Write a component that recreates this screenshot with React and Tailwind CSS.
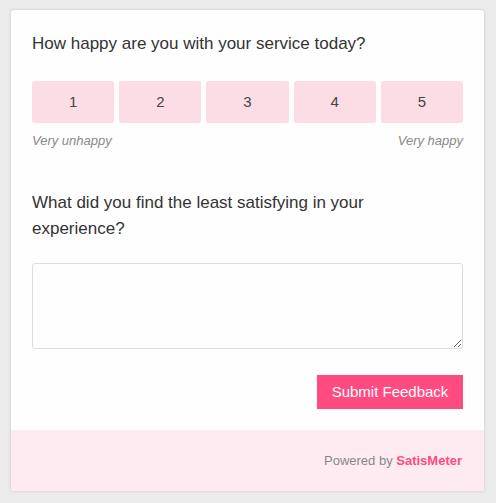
export default function App() {
  const nums = [1, 2, 3, 4, 5];
  return (
    <div className="w-[496px] h-[503px] bg-[#ebebeb] pt-[10px] pl-[11px]" style={{ fontFamily: '"Liberation Sans", Arial, sans-serif' }}>
      <div className="w-[473px] h-[481px] bg-[#fefefe] rounded-[3px] shadow-[0_0_3px_rgba(0,0,0,0.18)] flex flex-col overflow-hidden">
        <div className="px-[21px] pt-[21px] flex flex-col flex-1">
          <div className="text-[17px] leading-[26px] text-[#333]">
            How happy are you with your service today?
          </div>
          <div className="mt-[24px] flex gap-[5px]">
            {nums.map((n) => (
              <div key={n} className="flex-1 h-[42px] bg-[#fddde5] rounded-[2px] flex items-center justify-center text-[15px] text-[#444]">
                {n}
              </div>
            ))}
          </div>
          <div className="mt-[9px] flex justify-between text-[13px] leading-[18px] italic text-[#888]">
            <span>Very unhappy</span>
            <span>Very happy</span>
          </div>
          <div className="mt-[40px] text-[17px] leading-[26px] text-[#333]">
            What did you find the least satisfying in your<br />experience?
          </div>
          <textarea className="mt-[21px] h-[86px] w-full border border-[#dcdcdc] rounded-[3px] bg-[#fefefe] resize-y"></textarea>
          <div className="mt-[26px] flex justify-end">
            <button className="w-[146px] h-[34px] bg-[#ff4b80] text-white text-[15px]">Submit Feedback</button>
          </div>
        </div>
        <div className="h-[61px] bg-[#fdebf1] flex items-center justify-end pr-[22px] text-[13px] text-[#888]">
          <span>Powered by <span className="font-bold text-[#ff4b80]">SatisMeter</span></span>
        </div>
      </div>
    </div>
  );
}
